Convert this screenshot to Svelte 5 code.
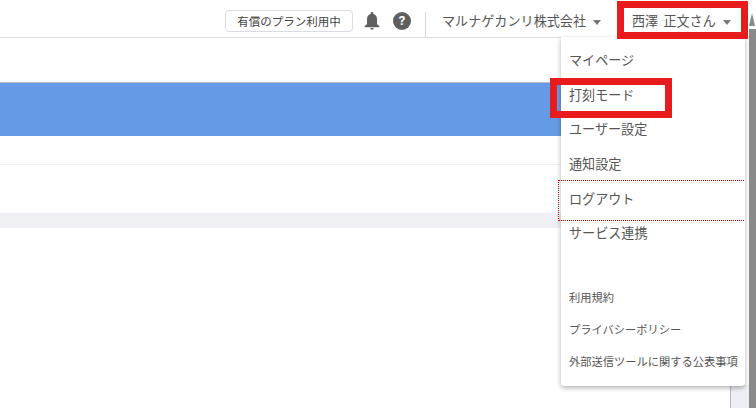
<script>
  const mainItems = ["マイページ", "打刻モード", "ユーザー設定", "通知設定", "ログアウト", "サービス連携"];
  const subItems = ["利用規約", "プライバシーポリシー", "外部送信ツールに関する公表事項"];
</script>

<div class="page">
  <header class="topbar">
    <button class="plan">有償のプラン利用中</button>
    <svg class="bell" width="16" height="18" viewBox="0 0 16 18">
      <path d="M8 0C7.200 0 6.700.6 6.700 1.400v.6C4.400 2.600 3 4.600 3 7.100V12L.6 14.200V15.200h14.800v-1L13 12V7.100c0-2.500-1.400-4.500-3.700-5.100v-.6C9.300.6 8.800 0 8 0zM6.300 16a1.700 1.800 0 0 0 3.400 0z" fill="#5f5f5f" />
    </svg>
    <span class="help">?</span>
    <span class="divider"></span>
    <span class="company">マルナゲカンリ株式会社<i class="caret"></i></span>
    <span class="user">西澤 正文さん<i class="caret"></i></span>
  </header>

  <div class="content">
    <div class="blue"></div>
    <div class="row"></div>
    <div class="band"></div>
  </div>

  <div class="scrollbar">
    <i class="arrow"></i>
    <i class="thumb"></i>
  </div>

  <div class="side-strip"></div>

  <nav class="menu">
    <ul class="main">
      {#each mainItems as item}
        <li>{item}</li>
      {/each}
    </ul>
    <ul class="sub">
      {#each subItems as item}
        <li>{item}</li>
      {/each}
    </ul>
  </nav>

  <div class="mark mark-user"></div>
  <div class="mark mark-stamp"></div>
  <div class="focus-logout"></div>
</div>

<style>
  :global(body) {
    margin: 0;
    background: #fff;
  }

  .page {
    position: relative;
    width: 756px;
    height: 408px;
    overflow: hidden;
    font-family: Roboto, "Noto Sans CJK JP", sans-serif;
    color: #555;
  }

  .topbar {
    display: flex;
    align-items: center;
    height: 33px;
    padding: 4px 11px 0 0;
    justify-content: flex-end;
    border-bottom: 1px solid #dcdcdc;
    box-sizing: content-box;
  }

  .plan {
    width: 128px;
    height: 22px;
    padding: 0;
    border: 1px solid #d9dce3;
    border-radius: 4px;
    background: #fff;
    color: #444;
    font: 11.500px Roboto, "Noto Sans CJK JP", sans-serif;
  }

  .bell {
    margin-left: 11px;
  }

  .help {
    width: 18px;
    height: 18px;
    margin-left: 13px;
    border-radius: 50%;
    background: #5f5f5f;
    color: #fff;
    font-size: 13px;
    font-weight: 700;
    line-height: 18px;
    text-align: center;
  }

  .divider {
    align-self: flex-end;
    width: 1px;
    height: 25px;
    margin: 0 16px 0 14px;
    background: #d8d8d8;
  }

  .company {
    display: flex;
    align-items: center;
    width: 190px;
    font-size: 13.100px;
    color: #555;
  }

  .user {
    display: flex;
    align-items: center;
    width: 113px;
    font-size: 13.100px;
    word-spacing: 2px;
    color: #555;
  }

  .caret {
    width: 0;
    height: 0;
    margin: 3px 0 0 7px;
    border-top: 5px solid #777;
    border-left: 4px solid transparent;
    border-right: 4px solid transparent;
  }

  .content {
    padding: 44px 11px 0 0;
  }

  .blue {
    height: 53px;
    border-top: 1px solid #bdbdbd;
    background: #659ae6;
  }

  .row {
    height: 77px;
    background: linear-gradient(#f0f0f0, #f0f0f0) 0 28px / 100% 1px no-repeat;
  }

  .band {
    height: 15px;
    background: #eff0f4;
  }

  .side-strip {
    position: absolute;
    top: 385px;
    left: 730px;
    width: 19px;
    height: 23px;
    box-sizing: border-box;
    border-left: 1px solid #b5b5b5;
    background: #eeeff5;
  }

  .scrollbar {
    position: absolute;
    top: 13px;
    right: 0;
    bottom: 0;
    width: 7px;
    display: flex;
    flex-direction: column;
    gap: 3px;
  }

  .arrow {
    width: 0;
    height: 0;
    border-bottom: 13px solid #8a8a8a;
    border-left: 3.500px solid transparent;
    border-right: 3.500px solid transparent;
  }

  .thumb {
    flex: 1;
    background: #8a8a8a;
  }

  .menu {
    position: absolute;
    top: 37px;
    left: 561px;
    width: 184px;
    height: 349px;
    box-sizing: border-box;
    padding-top: 6px;
    border-radius: 0 0 4px 4px;
    background: #fff;
    box-shadow: 0 2px 5px rgba(0, 0, 0, 0.3);
  }

  ul {
    margin: 0;
    padding: 0;
    list-style: none;
  }

  .main {
    margin-top: -0.6px;
  }

  .main li {
    display: flex;
    align-items: center;
    height: 34.600px;
    padding-left: 8px;
    font-size: 13.100px;
    color: #555;
  }

  .sub {
    margin-top: 30.600px;
  }

  .sub li {
    display: flex;
    align-items: center;
    height: 32px;
    padding-left: 8px;
    font-size: 11.250px;
    color: #555;
  }

  .mark {
    position: absolute;
    box-sizing: border-box;
    border: 7px solid #e81c1c;
  }

  .mark-user {
    top: 1px;
    left: 617px;
    width: 131px;
    height: 38px;
  }

  .mark-stamp {
    top: 78px;
    left: 550px;
    width: 122px;
    height: 40px;
  }

  .focus-logout {
    position: absolute;
    top: 180px;
    left: 558px;
    width: 186px;
    height: 41px;
    box-sizing: border-box;
    border: 1px dotted #e00000;
    border-right: 0;
  }
</style>
